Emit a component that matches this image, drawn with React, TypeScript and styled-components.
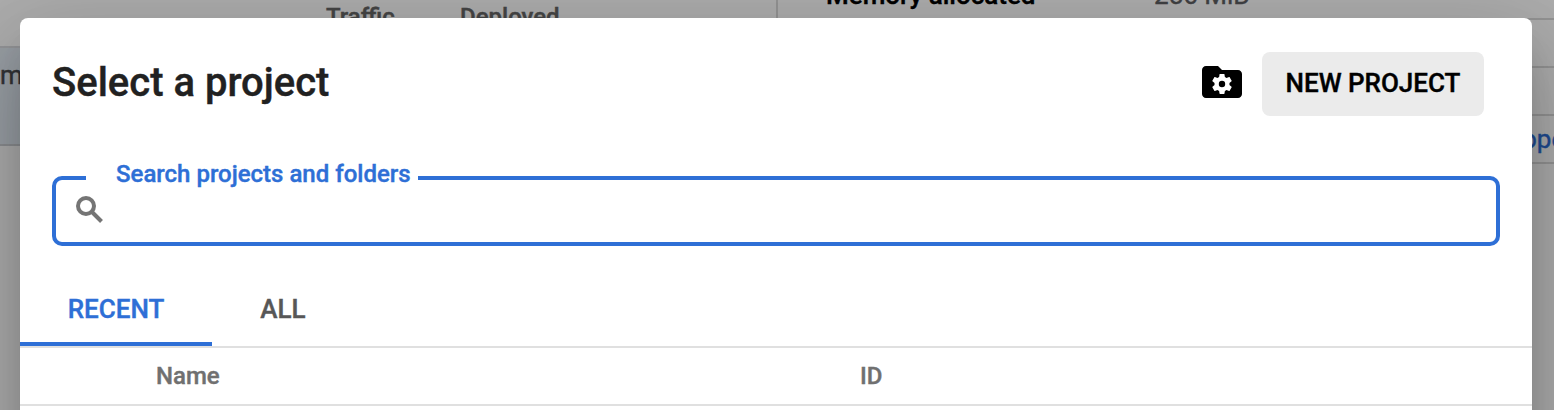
import React from "react";
import styled, { createGlobalStyle } from "styled-components";

const GlobalStyle = createGlobalStyle`
  *, *::before, *::after { box-sizing: border-box; }
  html, body { margin: 0; padding: 0; height: 100%; overflow: hidden; }
  body { font-family: Roboto, "Liberation Sans", sans-serif; background: #fff; -webkit-text-stroke: 0.4px currentColor; }
`;

const Screen = styled.div`
  position: relative;
  width: 1554px;
  height: 410px;
  overflow: hidden;
`;

const Page = styled.div`
  display: flex;
  height: 100%;
  background: #fff;
`;

const RevisionTable = styled.section`
  width: 776px;
  flex: none;
`;

const RevisionHead = styled.div`
  display: flex;
  height: 48px;
  padding-left: 326px;
  border-bottom: 2px solid #dadce0;
  font-size: 24px;
  font-weight: 500;
  line-height: 34px;
  color: #666;
`;

const HeadCell = styled.span<{ $width: number }>`
  width: ${(p) => p.$width}px;
  white-space: nowrap;
`;

const RevisionRow = styled.div`
  height: 98px;
  border-bottom: 2px solid #cdd0d5;
  background: #e2eaf3;
  font-size: 26px;
  line-height: 54px;
  color: #4a4c50;
`;

const DetailPanel = styled.section`
  flex: 1;
  border-left: 2px solid #dadada;
  font-size: 26px;
`;

const DetailRow = styled.div<{ $height: number }>`
  display: flex;
  align-items: flex-end;
  height: ${(p) => p.$height}px;
  padding: 0 0 8px 48px;
  border-bottom: 2px solid #dadada;
  line-height: 30px;
  white-space: nowrap;
`;

const DetailName = styled.strong`
  width: 328px;
  font-weight: 500;
  color: #000;
`;

const DetailValue = styled.span`
  color: #5f6063;
`;

const DetailLink = styled.a`
  margin-left: 696px;
  color: #2e6fd6;
`;

const Backdrop = styled.div`
  position: absolute;
  inset: 0;
  background: rgba(0, 0, 0, 0.32);
`;

const Dialog = styled.div`
  position: absolute;
  top: 18px;
  left: 20px;
  width: 1512px;
  height: 1000px;
  border-radius: 8px;
  background: #fff;
  box-shadow:
    0 22px 30px -14px rgba(0, 0, 0, 0.2),
    0 48px 76px 6px rgba(0, 0, 0, 0.14),
    0 18px 92px 16px rgba(0, 0, 0, 0.12);
`;

const DialogHeader = styled.header`
  display: flex;
  align-items: center;
  height: 98px;
  padding: 34px 48px 0 32px;
`;

const Title = styled.h1`
  flex: 1;
  margin: 0;
  font-size: 40px;
  font-weight: 500;
  line-height: 64px;
  padding-bottom: 2px;
  color: #212121;
`;

const FolderButton = styled.button`
  display: flex;
  width: 48px;
  height: 48px;
  margin-right: 16px;
  padding: 0;
  border: 0;
  background: none;
  align-self: flex-start;
  margin-top: 6px;
`;

const NewProjectButton = styled.button`
  width: 222px;
  height: 64px;
  padding: 0 0 2px;
  border: 0;
  border-radius: 8px;
  background: #ebebeb;
  color: #000;
  font: 500 26px/62px Roboto, "Liberation Sans", sans-serif;
  white-space: nowrap;
`;

const SearchField = styled.div`
  position: relative;
  display: flex;
  height: 70px;
  margin: 60px 32px 0;
  padding: 12px 16px;
  border: 4px solid #2e6fd6;
  border-radius: 10px;
`;

const SearchLabel = styled.label`
  position: absolute;
  top: -21px;
  left: 30px;
  width: 332px;
  padding-left: 30px;
  background: #fff;
  font-size: 24px;
  font-weight: 500;
  line-height: 30px;
  color: #2e6fd6;
  white-space: nowrap;
`;

const Tabs = styled.nav`
  display: flex;
  height: 84px;
  margin-top: 18px;
  border-bottom: 2px solid #e0e0e0;
`;

const Tab = styled.button<{ $active?: boolean; $width: number }>`
  width: ${(p) => p.$width}px;
  padding: 12px 0 0;
  border: 0;
  border-bottom: 4px solid ${(p) => (p.$active ? "#2e6fd6" : "transparent")};
  background: none;
  color: ${(p) => (p.$active ? "#2e6fd6" : "#575757")};
  font: 500 26px/30px Roboto, "Liberation Sans", sans-serif;
`;

const ListHead = styled.div`
  display: flex;
  height: 58px;
  padding-left: 136px;
  border-bottom: 2px solid #e0e0e0;
  font-size: 24px;
  font-weight: 500;
  line-height: 56px;
  color: #707070;
`;

const FolderSettingsIcon = () => (
  <svg width="48" height="48" viewBox="0 0 24 24">
    <path d="M10 4H4c-1.1 0-2 .9-2 2v12c0 1.1.9 2 2 2h16c1.1 0 2-.9 2-2V8c0-1.1-.9-2-2-2h-8z" />
    <path
      fill="#fff"
      fillRule="evenodd"
      transform="translate(6 7) scale(.5)"
      d="M19.43 12.98c.04-.32.07-.64.07-.98s-.03-.66-.07-.98l2.11-1.65c.19-.15.24-.42.12-.64l-2-3.46c-.12-.22-.39-.3-.61-.22l-2.49 1c-.52-.4-1.08-.73-1.69-.98l-.38-2.65C14.46 2.18 14.25 2 14 2h-4c-.25 0-.46.18-.49.42l-.38 2.65c-.61.25-1.17.59-1.69.98l-2.49-1c-.23-.09-.49 0-.61.22l-2 3.46c-.13.22-.07.49.12.64l2.11 1.65c-.04.32-.07.65-.07.98s.03.66.07.98l-2.11 1.65c-.19.15-.24.42-.12.64l2 3.46c.12.22.39.3.61.22l2.49-1c.52.4 1.08.73 1.69.98l.38 2.65c.03.24.24.42.49.42h4c.25 0 .46-.18.49-.42l.38-2.65c.61-.25 1.17-.59 1.69-.98l2.49 1c.23.09.49 0 .61-.22l2-3.46c.12-.22.07-.49-.12-.64zM12 15.2a3.2 3.2 0 1 1 0-6.4 3.2 3.2 0 0 1 0 6.4z"
    />
  </svg>
);

const SearchIcon = () => (
  <svg width="36" height="36" viewBox="0 0 36 36" fill="none" stroke="#757575" strokeWidth="4">
    <circle cx="14" cy="14" r="8" />
    <path d="M19.5 19.5L29.5 29.5" />
  </svg>
);

export default function App() {
  return (
    <>
      <GlobalStyle />
      <Screen>
        <Page>
          <RevisionTable>
            <RevisionHead>
              <HeadCell $width={134}>Traffic</HeadCell>
              <HeadCell $width={200}>Deployed</HeadCell>
            </RevisionHead>
            <RevisionRow>m</RevisionRow>
          </RevisionTable>
          <DetailPanel>
            <DetailRow $height={20}>
              <DetailName>Memory allocated</DetailName>
              <DetailValue>256 MiB</DetailValue>
            </DetailRow>
            <DetailRow $height={48} />
            <DetailRow $height={48} />
            <DetailRow $height={48}>
              <DetailLink>ope</DetailLink>
            </DetailRow>
          </DetailPanel>
        </Page>
        <Backdrop />
        <Dialog role="dialog">
          <DialogHeader>
            <Title>Select a project</Title>
            <FolderButton aria-label="Manage folders">
              <FolderSettingsIcon />
            </FolderButton>
            <NewProjectButton>NEW PROJECT</NewProjectButton>
          </DialogHeader>
          <SearchField>
            <SearchLabel>Search projects and folders</SearchLabel>
            <SearchIcon />
          </SearchField>
          <Tabs>
            <Tab $active $width={192}>RECENT</Tab>
            <Tab $width={142}>ALL</Tab>
          </Tabs>
          <ListHead>
            <HeadCell $width={704}>Name</HeadCell>
            <HeadCell $width={300}>ID</HeadCell>
          </ListHead>
        </Dialog>
      </Screen>
    </>
  );
}
